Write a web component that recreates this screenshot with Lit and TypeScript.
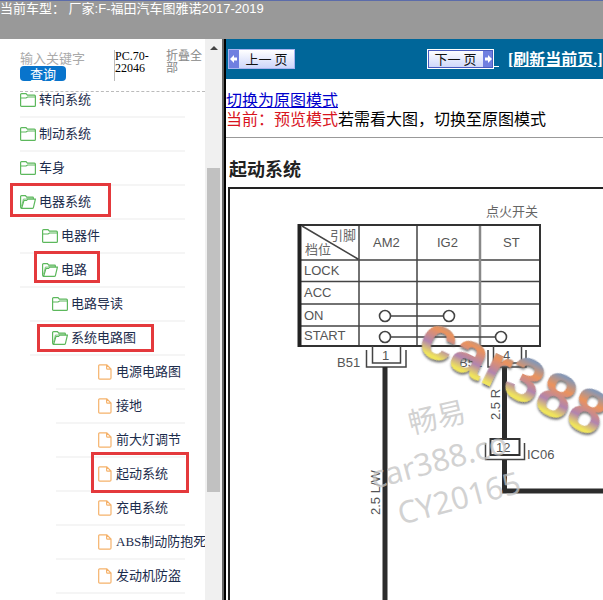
import { LitElement, html, svg, css } from "lit";
import { customElement, property } from "lit/decorators.js";
import { classMap } from "lit/directives/class-map.js";

type Kind = "closed" | "open" | "file";
interface Row {
  label: string;
  kind: Kind;
  level: number;
  mark?: string;
}

const ROWS: Row[] = [
  { label: "转向系统", kind: "closed", level: 0 },
  { label: "制动系统", kind: "closed", level: 0 },
  { label: "车身", kind: "closed", level: 0 },
  { label: "电器系统", kind: "open", level: 0, mark: "mark-a" },
  { label: "电器件", kind: "closed", level: 1 },
  { label: "电路", kind: "open", level: 1, mark: "mark-b" },
  { label: "电路导读", kind: "closed", level: 2 },
  { label: "系统电路图", kind: "open", level: 2, mark: "mark-c" },
  { label: "电源电路图", kind: "file", level: 3 },
  { label: "接地", kind: "file", level: 3 },
  { label: "前大灯调节", kind: "file", level: 3 },
  { label: "起动系统", kind: "file", level: 3, mark: "mark-d" },
  { label: "充电系统", kind: "file", level: 3 },
  { label: "ABS制动防抱死", kind: "file", level: 3 },
  { label: "发动机防盗", kind: "file", level: 3 },
];

const icons = {
  closed: html`<svg class="icon" width="16" height="16" viewBox="0 0 16 16" fill="none" stroke="#5cb85c" stroke-width="1.2">
    <path d="M.6 13.4V2.6Q.6 1.6 1.6 1.6H6L7.4 3.2H14.4Q15.4 3.2 15.4 4.2V13.4Q15.4 14.4 14.4 14.4H1.6Q.6 14.4 .6 13.4ZM.6 6H6L7.6 5H15.4" />
  </svg>`,
  open: html`<svg class="icon" width="16" height="16" viewBox="0 0 16 16" fill="none" stroke="#5cb85c" stroke-width="1.2">
    <path d="M1.6 14.4Q.6 14 .6 13V2.6Q.6 1.6 1.6 1.6H5.4L6.8 3.2H12.6Q13.4 3.2 13.4 4V5.2M1.6 14.4L4 6.4H6.6L7.6 5.2H15.4L13.4 13.6Q13.2 14.4 12.2 14.4Z" />
    <path d="M1.6 12L3.4 5H5.6L6.8 4.2H13" stroke-width=".7" />
  </svg>`,
  file: html`<svg class="icon" width="14" height="16" viewBox="0 0 14 16" fill="none" stroke="#f5b26b" stroke-width="1.2">
    <path d="M1.6.8H8.8L13 5V14Q13 15.2 11.8 15.2H1.8Q.7 15.2 .7 14V1.8Q.7.8 1.6.8ZM8.6.8V4.2Q8.6 5.2 9.6 5.2H13" />
  </svg>`,
};

@customElement("nav-tree")
class NavTree extends LitElement {
  @property({ attribute: false }) rows: Row[] = [];

  static styles = css`
    :host { display: block; }
    .list { margin: 0; padding: 0 20px 0 20px; list-style: none; }
    .row {
      position: relative;
      box-sizing: border-box;
      height: 34px;
      border-bottom: 2px solid #f5f5f5;
    }
    .link {
      display: flex;
      align-items: center;
      gap: 3px;
      height: 32px;
      color: #1c2c4c;
      font: 13px/18px "Liberation Serif", "Noto Sans CJK SC", serif;
      text-decoration: none;
      white-space: nowrap;
    }
    .icon { flex: none; display: block; }
    .l1 .link { padding-left: 22px; }
    .l2 { margin-left: 10px; }
    .l2 .link { padding-left: 22px; }
    .l3 { margin-left: 36px; }
    .l3 .link { padding-left: 42px; gap: 4px; }
    .mark { position: absolute; box-sizing: border-box; border: 3px solid #e4393c; pointer-events: none; }
    .mark-a { left: -10px; top: -3px; width: 101px; height: 34px; }
    .mark-b { left: 14px; top: -3px; width: 66px; height: 32px; }
    .mark-c { left: 7px; top: 2px; width: 117px; height: 28px; }
    .mark-d { left: 35px; top: -6px; width: 98px; height: 41px; }
  `;

  render() {
    return html`<ul class="list">
      ${this.rows.map(
        (r) => html`<li class=${classMap({ row: true, ["l" + r.level]: true })}>
          <a class="link" href="#">${icons[r.kind]}<span>${r.label}</span></a>
          ${r.mark ? html`<span class=${"mark " + r.mark}></span>` : ""}
        </li>`
      )}
    </ul>`;
  }
}

@customElement("wiring-diagram")
class WiringDiagram extends LitElement {
  static styles = css`
    :host { display: block; }
    .canvas { display: block; }
    .label { font: 13px "Liberation Sans", "Noto Sans CJK SC", sans-serif; fill: #555; }
    .cn { font: 13px "Noto Sans CJK SC", sans-serif; fill: #666; }
    .wm { font: 31px "Noto Sans", "Noto Sans CJK SC", sans-serif; fill: #c4c4c4; fill-opacity: 0.75; }
    .wm-cn { font: 29px "Noto Sans CJK SC", sans-serif; }
    .brand { font: bold 63px "Liberation Sans", sans-serif; }
  `;

  render() {
    const rowText = [["LOCK", 275], ["ACC", 297], ["ON", 320], ["START", 340]] as const;
    const pins = [[385, 316], [449, 316], [385, 337], [501, 337]];
    return html`<svg class="canvas" width="600" height="600" viewBox="230 189 600 600">
      <defs>
        <linearGradient id="rainbow" x1="0" y1="0" x2="0" y2="1">
          <stop offset=".22" stop-color="#8797b4" />
          <stop offset=".4" stop-color="#eb935c" />
          <stop offset=".62" stop-color="#b184ae" />
          <stop offset=".78" stop-color="#f0e45c" />
        </linearGradient>
        <filter id="shade" x="-10%" y="-10%" width="120%" height="130%">
          <feDropShadow dx="1" dy="2" stdDeviation="1.2" flood-color="#555" flood-opacity=".8" />
        </filter>
      </defs>
      <text class="cn" x="486" y="216">点火开关</text>
      <g fill="none" stroke="#444" stroke-width="1.5">
        <path d="M359 225V346M417 225V346M298 260H540M298 281.5H540M298 304H540M298 326H540M302 226L358 259" />
        <path d="M480 225V346" stroke="#888" stroke-width="2.5" />
        <path d="M298 225H540V346H298" stroke="#333" stroke-width="2" />
        <path d="M299.5 224V347" stroke="#222" stroke-width="4" />
        <path d="M391 316H443M391 337H495" />
        <path d="M366.5 350V367H406V350M372.5 346V363H400.5V346" />
        <path d="M488 350V367H526V350M493.5 346V363H521.5V346" />
        <path d="M485.5 443V459.5H524.5V443" />
      </g>
      ${pins.map(([x, y]) => svg`<circle cx=${x} cy=${y} r="5.5" fill="#fff" stroke="#444" stroke-width="1.6" />`)}
      <text class="cn" x="330" y="240">引脚</text>
      <text class="cn" x="305" y="254">档位</text>
      <g class="label">
        <text x="373" y="247">AM2</text>
        <text x="437" y="247">IG2</text>
        <text x="503" y="247">ST</text>
        ${rowText.map(([t, y]) => svg`<text x="304" y=${y}>${t}</text>`)}
        <text x="382" y="360">1</text>
        <text x="503" y="360">4</text>
        <text x="337" y="367">B51</text>
        <text x="459" y="367">B51</text>
        <text x="527" y="459">IC06</text>
        <text transform="translate(380 515) rotate(-90)">2.5 L/W</text>
        <text transform="translate(500 420) rotate(-90)">2.5 R</text>
      </g>
      <g fill="none" stroke="#2c2c2c" stroke-width="5">
        <path d="M385 367V789" />
        <path d="M504.5 367V439M504.5 460V491H830" />
      </g>
      <rect x="490.5" y="439" width="29" height="16" fill="#fff" stroke="#333" stroke-width="2" />
      <text class="label" x="496" y="452">12</text>
      <text class="wm wm-cn" transform="translate(411 434) rotate(-13)">畅易</text>
      <text class="wm" transform="translate(374 489) rotate(-15)">car388.co</text>
      <text class="wm" transform="translate(401 525) rotate(-15)">CY20165</text>
      <text class="brand" fill="url(#rainbow)" filter="url(#shade)" transform="translate(415 350) rotate(26)">car388</text>
    </svg>`;
  }
}

@customElement("app-root")
class AppRoot extends LitElement {
  static styles = css`
    :host {
      display: flex;
      flex-direction: column;
      height: 100vh;
      overflow: hidden;
      background: #fff;
      color: #000;
      font: 16px/19px "Liberation Serif", "Noto Sans CJK SC", serif;
    }
    .top {
      flex: none;
      box-sizing: border-box;
      height: 39px;
      border-top: 1px solid #5c6caa;
      background: #999;
      color: #fff;
      font: 13px/15px "Liberation Sans", "Noto Sans CJK SC", sans-serif;
      white-space: pre;
    }
    .body { flex: 1; min-height: 0; display: flex; }
    .side { flex: none; width: 205px; display: flex; flex-direction: column; overflow: hidden; }
    .search {
      flex: none;
      box-sizing: border-box;
      display: flex;
      align-items: flex-start;
      height: 53px;
      margin-left: 20px;
      padding-top: 11px;
      border-bottom: 1px dashed #bbb;
      font-size: 12px;
      line-height: 12px;
    }
    .form { width: 94px; display: flex; flex-direction: column; align-items: flex-start; }
    .query {
      box-sizing: border-box;
      width: 90px;
      height: 16px;
      padding: 0;
      border: 0;
      outline: 0;
      background: none;
      font: 13px/16px "Noto Sans CJK SC", sans-serif;
    }
    .query::placeholder { color: #aaa; }
    .go {
      width: 46px;
      height: 15px;
      padding: 0;
      border: 0;
      border-radius: 4px;
      background: #0874cc;
      color: #fff;
      font: 13px/15px "Noto Sans CJK SC", sans-serif;
    }
    .code { box-sizing: border-box; width: 52px; height: 31px; border-left: 1px solid #bbb; }
    .fold { width: 38px; color: #888; text-decoration: none; }
    .tree { flex: 1; min-height: 0; overflow: hidden; margin-top: -8px; }
    .scroll { flex: none; display: flex; flex-direction: column; align-items: center; width: 17px; background: #f0f0f0; }
    .arrow { margin-top: 7px; border: 4px solid transparent; border-top: 0; border-bottom: 4px solid #444; }
    .thumb { width: 13px; height: 324px; margin-top: 118px; background: #c1c1c1; }
    .split { flex: none; width: 2px; border-right: 2px solid #000; background: #666; }
    .main { flex: 1; min-width: 0; overflow: hidden; white-space: nowrap; }
    .bar { display: flex; align-items: center; box-sizing: border-box; height: 40px; padding: 0 0 0 2px; background: #069; }
    .page {
      display: flex;
      align-items: center;
      box-sizing: border-box;
      width: 67px;
      height: 20px;
      padding: 0;
      border: 1px solid #a8b4f0;
      background: linear-gradient(#fff, #cdd6fa);
      color: #111;
      font: 13px/18px "Noto Sans CJK SC", sans-serif;
    }
    .page-text { flex: 1; white-space: pre; }
    .tab { flex: none; width: 10px; height: 18px; background: #6f7fe0; }
    .next { margin-left: 132px; border-color: #fff; outline: 1px solid #4a5cc0; outline-offset: -2px; }
    .dash { width: 5px; height: 14px; border-bottom: 1px solid #fff; }
    .reload { margin-left: 9px; color: #fff; font-weight: bold; }
    .mode { height: 59px; box-sizing: border-box; padding-top: 12px; border-bottom: 1px solid #999; }
    .line { height: 19px; }
    .switch { color: #00c; }
    .now { color: #d8141e; }
    .title { margin: 18px 0 6px 3px; color: #222; font: bold 18px/25px "Noto Sans CJK SC", sans-serif; }
    .frame { margin-left: 2px; border: solid #222; border-width: 2px 0 0 2px; overflow: hidden; }
  `;

  render() {
    return html`
      <header class="top">当前车型： 厂家:F-福田汽车图雅诺2017-2019</header>
      <div class="body">
        <aside class="side">
          <div class="search">
            <div class="form">
              <input class="query" type="text" aria-label="输入关键字" placeholder="输入关键字" />
              <button class="go">查询</button>
            </div>
            <div class="code">PC.70-<br />22046</div>
            <a class="fold" href="#">折叠全<br />部</a>
          </div>
          <nav-tree class="tree" .rows=${ROWS}></nav-tree>
        </aside>
        <div class="scroll"><div class="arrow"></div><div class="thumb"></div></div>
        <div class="split"></div>
        <main class="main">
          <div class="bar">
            <button class="page">
              <svg class="tab" viewBox="0 0 10 18"><path d="M1 9L5 5V7.5H8V10.5H5V13Z" fill="#fff" /></svg>
              <span class="page-text">上一 页</span>
            </button>
            <button class="page next">
              <span class="page-text">下一 页</span>
              <svg class="tab" viewBox="0 0 10 18"><path d="M9 9L5 5V7.5H2V10.5H5V13Z" fill="#fff" /></svg>
            </button>
            <span class="dash"></span>
            <a class="reload" href="#">[刷新当前页.]</a>
          </div>
          <div class="mode">
            <div class="line"><a class="switch" href="#">切换为原图模式</a></div>
            <div class="line"><span class="now">当前：预览模式</span>若需看大图，切换至原图模式</div>
          </div>
          <h1 class="title">起动系统</h1>
          <div class="frame"><wiring-diagram></wiring-diagram></div>
        </main>
      </div>
    `;
  }
}
